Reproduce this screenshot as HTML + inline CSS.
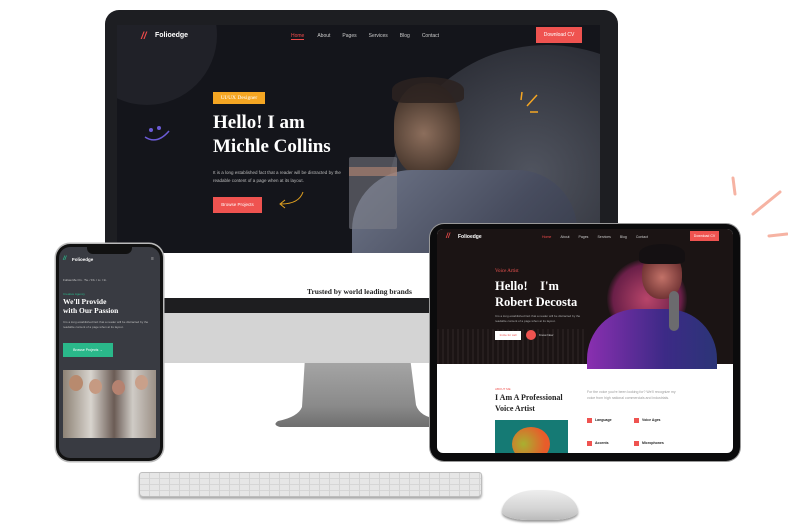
<!DOCTYPE html>
<html><head><meta charset="utf-8"><style>
*{margin:0;padding:0;box-sizing:border-box}
body{width:788px;height:530px;background:#fff;position:relative;overflow:hidden;font-family:"Liberation Sans",sans-serif}
.a{position:absolute}
.serif{font-family:"Liberation Serif",serif}
</style></head><body>

<svg class="a" style="left:725px;top:170px" width="63" height="75"><g stroke="#f6b3a3" stroke-width="3" stroke-linecap="round"><line x1="8" y1="8" x2="10" y2="24"/><line x1="28" y1="44" x2="55" y2="22"/><line x1="44" y1="66" x2="62" y2="64"/></g></svg>

<svg class="a" style="left:270px;top:355px" width="170" height="75"><defs><linearGradient id="st" x1="0" x2="0" y1="0" y2="1"><stop offset="0" stop-color="#a8a8a8"/><stop offset=".7" stop-color="#8a8a8a"/><stop offset="1" stop-color="#6e6e6e"/></linearGradient></defs><path d="M35 2 L140 2 L146 50 Q150 62 168 64 L168 72 L10 72 Q2 70 8 66 Q28 62 32 52 Z" fill="url(#st)"/></svg>

<div class="a" style="left:105px;top:10px;width:513px;height:352px;background:#1d1e22;border-radius:14px 14px 0 0"></div>
<div class="a" style="left:108px;top:297px;width:508px;height:66px;background:#d3d3d3"></div>
<div class="a" style="left:117px;top:25px;width:483px;height:228px;background:#14151b;overflow:hidden">
  <div class="a" style="left:270px;top:20px;width:320px;height:320px;border-radius:50%;background:radial-gradient(circle at 45% 40%,#50545f,#2a2c34 55%,#18191f 75%)"></div>
  <div class="a" style="left:-40px;top:-60px;width:140px;height:140px;border-radius:50%;background:#202128"></div>
  <div class="a" style="left:277px;top:58px;width:66px;height:92px;border-radius:45% 45% 40% 40%;background:radial-gradient(circle at 45% 55%,#8c6e5c,#4e3c31 60%,#241d1b)"></div>
  <div class="a" style="left:275px;top:52px;width:72px;height:26px;border-radius:50% 50% 20% 20%;background:#2b2220;opacity:.85"></div>
  <div class="a" style="left:235px;top:145px;width:225px;height:110px;border-radius:60px 60px 0 0;background:linear-gradient(135deg,#6f7689,#474c5e 60%,#353a48)"></div>
  <div class="a" style="left:232px;top:132px;width:48px;height:72px;background:#7d7f89;opacity:.55;border-radius:2px"></div>
  <div class="a" style="left:232px;top:142px;width:48px;height:9px;background:#b88873;opacity:.6"></div>
  <div class="a" style="left:24px;top:6px;color:#ef4b4b;font-size:10px;font-weight:bold;font-style:italic">//</div>
  <div class="a" style="left:38px;top:7px;color:#fff;font-size:7px;font-weight:bold">Folioedge</div>
  <div class="a" style="left:174px;top:8px;font-size:5px;color:#ccc;white-space:nowrap"><span style="color:#ef4b4b;border-bottom:1px solid #ef4b4b">Home</span><span style="margin-left:13px">About</span><span style="margin-left:12px">Pages</span><span style="margin-left:12px">Services</span><span style="margin-left:12px">Blog</span><span style="margin-left:12px">Contact</span></div>
  <div class="a" style="left:419px;top:2px;width:46px;height:16px;background:#ef5350;color:#fff;font-size:5px;line-height:16px;text-align:center">Download CV</div>
  <div class="a serif" style="left:96px;top:67px;width:52px;height:12px;background:#f5a623;color:#fff;font-size:5.5px;line-height:12px;text-align:center">UI/UX Designer</div>
  <div class="a serif" style="left:96px;top:86px;color:#fff;font-size:19px;font-weight:bold;line-height:24px">Hello! I am<br>Michle Collins</div>
  <div class="a" style="left:96px;top:144px;color:#bbb;font-size:4.5px;line-height:8px;width:142px">It is a long established fact that a reader will be distracted by the readable content of a page when at its layout.</div>
  <div class="a" style="left:96px;top:172px;width:49px;height:16px;background:#ef5350;color:#fff;font-size:4.5px;line-height:16px;text-align:center">Browse Projects</div>
  <svg class="a" style="left:26px;top:100px" width="30" height="20"><circle cx="8" cy="5" r="2" fill="#6b5bd6"/><circle cx="16" cy="3" r="2" fill="#6b5bd6"/><path d="M2 12 Q14 20 26 6" stroke="#6b5bd6" stroke-width="1.5" fill="none"/></svg>
  <svg class="a" style="left:160px;top:165px" width="30" height="20"><path d="M26 2 Q22 14 4 14 M8 10 L3 14 L8 18" stroke="#e0a020" stroke-width="1" fill="none"/></svg>
  <svg class="a" style="left:400px;top:65px" width="30" height="30"><g stroke="#f5a623" stroke-width="1.5"><line x1="5" y1="2" x2="4" y2="10"/><line x1="10" y1="16" x2="20" y2="5"/><line x1="13" y1="22" x2="21" y2="22"/></g></svg>
</div>
<div class="a" style="left:117px;top:253px;width:483px;height:45px;background:#fff"></div>
<div class="a serif" style="left:307px;top:287px;font-size:7.5px;font-weight:bold;color:#222">Trusted by world leading brands</div>
<div class="a" style="left:162px;top:298px;width:438px;height:15px;background:#1e1e20"></div>
<div class="a" style="left:162px;top:313px;width:280px;height:48px;background:#d4d4d4"></div>

<div class="a" style="left:139px;top:472px;width:343px;height:25px;background:#e6e6e6;border:1px solid #bdbdbd;border-radius:3px 3px 4px 4px;box-shadow:0 2px 2px #aaa;background-image:repeating-linear-gradient(90deg,transparent 0 9px,#d4d4d4 9px 10px),repeating-linear-gradient(0deg,transparent 0 5px,#d6d6d6 5px 6px)"></div>
<div class="a" style="left:502px;top:490px;width:76px;height:30px;border-radius:40px 40px 30px 30px/25px 25px 10px 10px;background:linear-gradient(#eee,#d5d5d5 60%,#bbb);box-shadow:0 2px 2px #999"></div>

<div class="a" style="left:430px;top:224px;width:310px;height:237px;background:#0b0b0c;border-radius:14px;box-shadow:0 0 0 1px #999"></div>
<div class="a" style="left:437px;top:229px;width:296px;height:224px;background:#fff;border-radius:6px;overflow:hidden">
  <div class="a" style="left:0;top:0;width:296px;height:135px;background:#1b1414"></div>
  <div class="a" style="left:0;top:100px;width:150px;height:35px;background:repeating-linear-gradient(90deg,#2a2222 0 2px,transparent 2px 5px);opacity:.7"></div>
  <div class="a" style="left:170px;top:30px;width:80px;height:80px;border-radius:50%;background:radial-gradient(#b8456a,#6a1f48 60%,transparent 72%)"></div>
  <div class="a" style="left:150px;top:80px;width:130px;height:60px;border-radius:50px 50px 0 0;background:linear-gradient(90deg,#8a2fb0,#3c2a86 60%,#2b3577)"></div>
  <div class="a" style="left:205px;top:22px;width:40px;height:48px;border-radius:45%;background:radial-gradient(circle at 50% 55%,#c27268,#6b2f30 70%)"></div>
  <div class="a" style="left:202px;top:15px;width:46px;height:20px;border-radius:50% 50% 20% 20%;background:#141012"></div>
  <div class="a" style="left:232px;top:62px;width:10px;height:40px;background:#6b6b6e;border-radius:5px"></div>
  <div class="a" style="left:9px;top:4px;color:#ef4b4b;font-size:7px;font-weight:bold;font-style:italic">//</div>
  <div class="a" style="left:21px;top:5px;color:#fff;font-size:5px;font-weight:bold">Folioedge</div>
  <div class="a" style="left:105px;top:6px;font-size:3.5px;color:#ccc;white-space:nowrap"><span style="color:#ef4b4b">Home</span><span style="margin-left:9px">About</span><span style="margin-left:9px">Pages</span><span style="margin-left:9px">Services</span><span style="margin-left:9px">Blog</span><span style="margin-left:9px">Contact</span></div>
  <div class="a" style="left:253px;top:2px;width:29px;height:10px;background:#ef5350;color:#fff;font-size:3.5px;line-height:10px;text-align:center">Download CV</div>
  <div class="a serif" style="left:58px;top:40px;color:#ef5350;font-size:5px">Voice Artist</div>
  <div class="a serif" style="left:58px;top:49px;color:#fff;font-size:12.5px;font-weight:bold;line-height:16px;white-space:pre">Hello!    I'm
Robert Decosta</div>
  <div class="a" style="left:58px;top:85px;color:#aaa;font-size:3px;line-height:5px;width:90px">It is a long established fact that a reader will be distracted by the readable content of a page when at its layout.</div>
  <div class="a" style="left:58px;top:102px;width:26px;height:9px;background:#fff;color:#ef5350;font-size:3px;line-height:9px;text-align:center">Invite for call</div>
  <div class="a" style="left:89px;top:101px;width:10px;height:10px;border-radius:50%;background:#ef5350"></div>
  <div class="a" style="left:102px;top:104px;color:#ddd;font-size:3px">Know Now</div>
  <div class="a" style="left:58px;top:158px;color:#ef5350;font-size:3px">ABOUT ME</div>
  <div class="a serif" style="left:58px;top:163px;color:#222;font-size:8px;font-weight:bold;line-height:11px">I Am A Professional<br>Voice Artist</div>
  <div class="a" style="left:150px;top:161px;color:#999;font-size:3.5px;line-height:5.5px;width:90px">For the voice you're been looking for? We'll recognize my voice from high national commercials and industrials.</div>
  <div class="a" style="left:58px;top:191px;width:73px;height:40px;background:#157a74"></div>
  <div class="a" style="left:75px;top:198px;width:38px;height:34px;border-radius:50%;background:radial-gradient(circle at 30% 50%,#a8b030,#e85c2a 70%)"></div>
  <div class="a" style="left:150px;top:189px;width:5px;height:5px;background:#ef5350"></div>
  <div class="a" style="left:158px;top:189px;font-size:3.5px;font-weight:bold;color:#222">Language</div>
  <div class="a" style="left:197px;top:189px;width:5px;height:5px;background:#ef5350"></div>
  <div class="a" style="left:205px;top:189px;font-size:3.5px;font-weight:bold;color:#222">Voice Ages</div>
  <div class="a" style="left:150px;top:212px;width:5px;height:5px;background:#ef5350"></div>
  <div class="a" style="left:158px;top:212px;font-size:3.5px;font-weight:bold;color:#222">Accents</div>
  <div class="a" style="left:197px;top:212px;width:5px;height:5px;background:#ef5350"></div>
  <div class="a" style="left:205px;top:212px;font-size:3.5px;font-weight:bold;color:#222">Microphones</div>
</div>

<div class="a" style="left:56px;top:244px;width:107px;height:217px;background:#111;border-radius:14px;box-shadow:0 0 0 1.5px #bbb"></div>
<div class="a" style="left:59px;top:247px;width:101px;height:211px;background:#393b42;border-radius:11px;overflow:hidden">
  <div class="a" style="left:28px;top:0;width:45px;height:7px;background:#111;border-radius:0 0 6px 6px"></div>
  <div class="a" style="left:4px;top:9px;color:#2ab88a;font-size:6px;font-weight:bold;font-style:italic">//</div>
  <div class="a" style="left:13px;top:10px;color:#fff;font-size:4.5px;font-weight:bold">Folioedge</div>
  <div class="a" style="left:92px;top:9px;color:#bbb;font-size:5px">≡</div>
  <div class="a" style="left:4px;top:31px;color:#ccc;font-size:3px;white-space:nowrap">Follow Me On · Tw. / Fb. / Li. / In.</div>
  <div class="a" style="left:4px;top:45px;color:#2ab88a;font-size:3px">Creative Agency</div>
  <div class="a serif" style="left:4px;top:50px;color:#fff;font-size:7.5px;font-weight:bold;line-height:9px">We'll Provide<br>with Our Passion</div>
  <div class="a" style="left:4px;top:73px;color:#bbb;font-size:3px;line-height:5px;width:95px">It is a long established fact that a reader will be distracted by the readable content of a page when at its layout.</div>
  <div class="a" style="left:4px;top:96px;width:50px;height:14px;background:#2ab88a;color:#fff;font-size:3.5px;line-height:14px;text-align:center">Browse Projects →</div>
  <div class="a" style="left:4px;top:123px;width:93px;height:68px;background:linear-gradient(90deg,#8d8275,#d8d4ce 30%,#6b5c55 55%,#cfcbc6 75%,#9b8f85)"></div>
  <div class="a" style="left:10px;top:128px;width:14px;height:16px;border-radius:50%;background:#b88a6e"></div>
  <div class="a" style="left:30px;top:132px;width:13px;height:15px;border-radius:50%;background:#c69a82"></div>
  <div class="a" style="left:53px;top:133px;width:13px;height:15px;border-radius:50%;background:#b58270"></div>
  <div class="a" style="left:76px;top:128px;width:13px;height:15px;border-radius:50%;background:#c9a08a"></div>
</div>
</body></html>
